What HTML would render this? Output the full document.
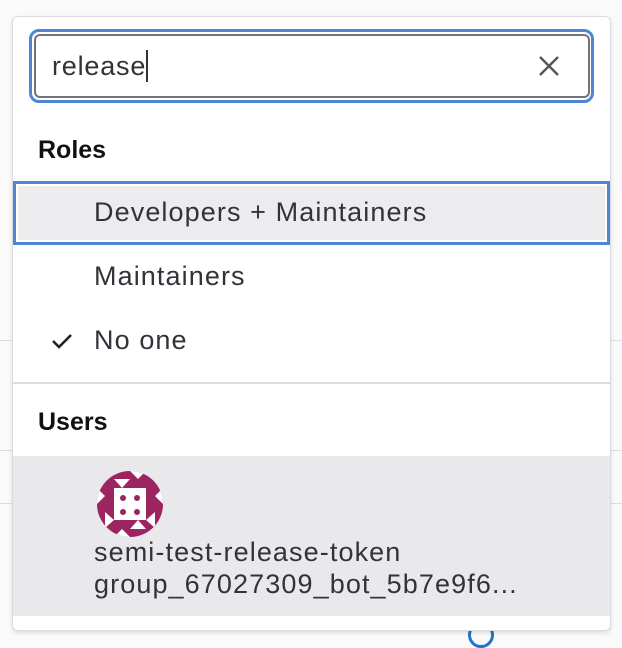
<!DOCTYPE html><html><head><style>
body{margin:0;width:622px;height:642px;background:#fafafa;position:relative;overflow:hidden;font-family:"Liberation Sans",Arial,sans-serif;color:#333238}
.l{position:absolute;height:1px;background:#dcdcde}
.dd{position:absolute;left:12px;top:16px;width:597px;height:613px;background:#fff;border:1px solid #dcdcde;border-radius:6px;box-shadow:0 2px 4px rgba(0,0,0,.12);overflow:hidden}
.t{position:absolute;font-size:27px;letter-spacing:1.1px;white-space:nowrap}
</style></head><body>
<div class="l" style="left:0;width:622px;top:340px"></div>
<div class="l" style="left:0;width:622px;top:450px"></div>
<div class="l" style="left:0;width:622px;top:503px"></div>
<div style="position:absolute;left:468px;top:622px;width:26px;height:26px;border:3px solid #1f75cb;border-radius:50%;box-sizing:border-box"></div>
<div class="dd">
<div style="position:absolute;left:16px;top:12px;width:565px;height:74px;border:3px solid #4f86d3;border-radius:10px;box-sizing:border-box"></div>
<div style="position:absolute;left:21px;top:17px;width:556px;height:64px;border:2px solid #737278;border-radius:6px;box-sizing:border-box"></div>
<div class="t" style="left:39px;top:33px;font-size:27px;letter-spacing:0.8px">release<span style="display:inline-block;width:2px;height:32px;background:#333;vertical-align:-7px"></span></div>
<svg style="position:absolute;left:525px;top:38px" width="22" height="22" viewBox="0 0 22 22"><path d="M2 2L20 20M20 2L2 20" stroke="#555" stroke-width="2.4"/></svg>
<div class="t" style="left:25px;top:119px;font-weight:bold;color:#111;font-size:25px;letter-spacing:0">Roles</div>
<div style="position:absolute;left:0;top:164px;width:597px;height:64px;background:#ececee;border:3px solid #4f86d3;box-sizing:border-box;box-shadow:inset 0 0 0 2px #fff"></div>
<div class="t" style="left:81px;top:180px">Developers + Maintainers</div>
<div class="t" style="left:81px;top:244px">Maintainers</div>
<svg style="position:absolute;left:38px;top:315px" width="22" height="18" viewBox="0 0 22 18"><path d="M2 9L8 15L20 3" stroke="#222" stroke-width="2.6" fill="none"/></svg>
<div class="t" style="left:81px;top:308px">No one</div>
<div style="position:absolute;left:0;top:365px;width:597px;height:2px;background:#dcdcde"></div>
<div class="t" style="left:25px;top:391px;font-weight:bold;color:#111;font-size:25px;letter-spacing:0">Users</div>
<div style="position:absolute;left:0;top:439px;width:597px;height:160px;background:#e9e9eb"></div>
<svg style="position:absolute;left:84px;top:454px" width="66" height="66" viewBox="0 0 66 66"><clipPath id="c"><circle cx="33" cy="33" r="33"/></clipPath><g clip-path="url(#c)"><rect width="66" height="66" fill="#9c2460"/><rect x="17" y="17" width="32" height="32" fill="#fff"/><path d="M0 17L8 25L0 33ZM66 17L58 25L66 33ZM17 66L25 58L33 66ZM33 0L41 8L49 0ZM8 41L17 49L8 57ZM58 41L49 49L58 57ZM17 8L25 17L33 8ZM33 58L41 49L49 58Z" fill="#fff"/><circle cx="26" cy="27" r="3" fill="#9c2460"/><circle cx="40" cy="27" r="3" fill="#9c2460"/><circle cx="26" cy="41" r="3" fill="#9c2460"/><circle cx="40" cy="41" r="3" fill="#9c2460"/></g></svg>
<div class="t" style="left:81px;top:520px">semi-test-release-token</div>
<div class="t" style="left:81px;top:552px">group_67027309_bot_5b7e9f6...</div>
</div>
</body></html>
